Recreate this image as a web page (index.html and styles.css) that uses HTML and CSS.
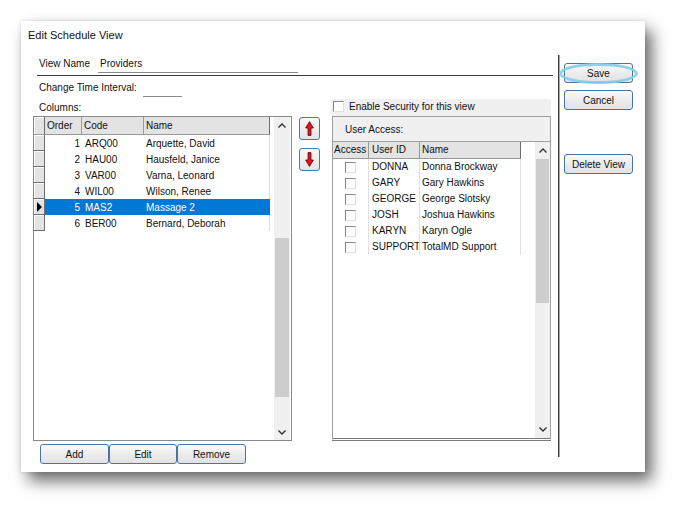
FILE: index.html
```html
<!DOCTYPE html>
<html>
<head>
<meta charset="utf-8">
<title>Edit Schedule View</title>
<link rel="stylesheet" href="styles.css">
</head>
<body>
<div class="dialog">
  <div class="title">Edit Schedule View</div>
  <div class="content">
    <div class="main">
      <div class="name-row">
        <span class="name-lbl">View Name</span>
        <span class="name-input">Providers</span>
      </div>
      <div class="cols">
        <div class="left">
          <div class="interval-row"><span>Change Time Interval:</span><span class="interval-input"></span></div>
          <div class="columns-lbl">Columns:</div>
          <div class="lgrid">
            <div class="ltable">
              <div class="lrow lhead">
                <div class="rh"></div><div class="c order">Order</div><div class="c code">Code</div><div class="c name">Name</div>
              </div>
              <div class="lrow"><div class="rh"></div><div class="c order">1</div><div class="c code">ARQ00</div><div class="c name">Arquette, David</div></div>
              <div class="lrow"><div class="rh"></div><div class="c order">2</div><div class="c code">HAU00</div><div class="c name">Hausfeld, Janice</div></div>
              <div class="lrow"><div class="rh"></div><div class="c order">3</div><div class="c code">VAR00</div><div class="c name">Varna, Leonard</div></div>
              <div class="lrow"><div class="rh"></div><div class="c order">4</div><div class="c code">WIL00</div><div class="c name">Wilson, Renee</div></div>
              <div class="lrow sel"><div class="rh"><span class="tri"></span></div><div class="c order">5</div><div class="c code">MAS2</div><div class="c name">Massage 2</div></div>
              <div class="lrow"><div class="rh"></div><div class="c order">6</div><div class="c code">BER00</div><div class="c name">Bernard, Deborah</div></div>
            </div>
            <div class="vscroll lscroll">
              <div class="sbtn"><svg width="8" height="5" viewBox="0 0 8 5"><path d="M0.5 4.5 L4 1 L7.5 4.5" fill="none" stroke="#333" stroke-width="1.4"/></svg></div>
              <div class="strack l-up"></div>
              <div class="sthumb l-thumb"></div>
              <div class="strack l-down"></div>
              <div class="sbtn"><svg width="8" height="5" viewBox="0 0 8 5"><path d="M0.5 0.5 L4 4 L7.5 0.5" fill="none" stroke="#333" stroke-width="1.4"/></svg></div>
            </div>
          </div>
          <div class="btn-row">
            <button class="btn b-add">Add</button><button class="btn b-edit">Edit</button><button class="btn b-rem">Remove</button>
          </div>
        </div>
        <div class="arrows">
          <button class="abtn"><svg width="9" height="15" viewBox="0 0 9 15"><path d="M4.5 0.6 L8.4 7 L6 7 L6 14.4 L3 14.4 L3 7 L0.6 7 Z" fill="#e8101a" stroke="#5a0a0a" stroke-width="0.8"/></svg></button>
          <button class="abtn"><svg width="9" height="15" viewBox="0 0 9 15"><path d="M4.5 14.4 L8.4 8 L6 8 L6 0.6 L3 0.6 L3 8 L0.6 8 Z" fill="#e8101a" stroke="#5a0a0a" stroke-width="0.8"/></svg></button>
        </div>
        <div class="right">
          <div class="sec-band"><span class="chk"></span><span>Enable Security for this view</span></div>
          <div class="ua-box">User Access:</div>
          <div class="rgrid">
            <div class="rtable">
              <div class="rrow rhead"><div class="c acc">Access</div><div class="c uid">User ID</div><div class="c uname">Name</div></div>
              <div class="rrow"><div class="c acc"><span class="chk"></span></div><div class="c uid">DONNA</div><div class="c uname">Donna Brockway</div></div>
              <div class="rrow"><div class="c acc"><span class="chk"></span></div><div class="c uid">GARY</div><div class="c uname">Gary Hawkins</div></div>
              <div class="rrow"><div class="c acc"><span class="chk"></span></div><div class="c uid">GEORGE</div><div class="c uname">George Slotsky</div></div>
              <div class="rrow"><div class="c acc"><span class="chk"></span></div><div class="c uid">JOSH</div><div class="c uname">Joshua Hawkins</div></div>
              <div class="rrow"><div class="c acc"><span class="chk"></span></div><div class="c uid">KARYN</div><div class="c uname">Karyn Ogle</div></div>
              <div class="rrow"><div class="c acc"><span class="chk"></span></div><div class="c uid">SUPPORT</div><div class="c uname">TotalMD Support</div></div>
            </div>
            <div class="vscroll rscroll">
              <div class="sbtn"><svg width="8" height="5" viewBox="0 0 8 5"><path d="M0.5 4.5 L4 1 L7.5 4.5" fill="none" stroke="#333" stroke-width="1.4"/></svg></div>
              <div class="sthumb r-thumb"></div>
              <div class="strack r-down"></div>
              <div class="sbtn"><svg width="8" height="5" viewBox="0 0 8 5"><path d="M0.5 0.5 L4 4 L7.5 0.5" fill="none" stroke="#333" stroke-width="1.4"/></svg></div>
            </div>
          </div>
        </div>
      </div>
    </div>
    <div class="vline"></div>
    <div class="side">
      <div class="save-wrap"><button class="btn sbtn-side">Save</button><span class="ring"></span></div>
      <button class="btn sbtn-side b-cancel">Cancel</button>
      <button class="btn sbtn-side b-del">Delete View</button>
    </div>
  </div>
</div>
</body>
</html>
```

FILE: styles.css
```css
* { box-sizing: border-box; }
html, body { margin: 0; padding: 0; background: #fff; }
body {
  width: 687px; height: 514px; overflow: hidden;
  font-family: "Liberation Sans", Arial, sans-serif;
  font-size: 10px; color: #111;
}
.dialog {
  margin: 21px 0 0 21px;
  width: 624px; height: 451px;
  background: #fff;
  box-shadow: 7px 9px 15px rgba(0,0,0,0.58), 0 0 4px rgba(0,0,0,0.12);
}
.title {
  height: 34px; padding: 7px 0 0 7px;
  font-size: 11px; line-height: 14px; color: #111;
}
.content { display: flex; align-items: flex-start; }
.main { width: 520px; margin-left: 12px; }
.name-row {
  display: flex; height: 21px; margin-left: 4px; width: 516px;
  padding-top: 2px; border-bottom: 1px solid #3a3a3a;
}
.name-lbl { width: 61px; padding-left: 2px; line-height: 14px; }
.name-input {
  width: 200px; height: 16px; padding-left: 2px; line-height: 14px;
  border-bottom: 1px solid #8a8a8a;
}
.cols { display: flex; }
.left { width: 259px; }
.interval-row { display: flex; height: 21px; padding: 5px 0 0 6px; line-height: 14px; }
.interval-input { width: 39px; height: 16px; margin-left: 6px; border-bottom: 1px solid #8a8a8a; }
.columns-lbl { height: 19px; padding: 4px 0 0 6px; line-height: 14px; }

.lgrid { display: flex; height: 325px; border: 1px solid #8a8a8a; }
.ltable { width: 236px; margin-right: 4px; }
.lrow { display: flex; height: 16px; line-height: 15px; }
.lrow .c { white-space: nowrap; overflow: hidden; padding-top: 1px; }
.lrow .rh {
  width: 11px; background: #e3e3e3;
  border-right: 1px solid #6e6e6e; border-bottom: 1px solid #6e6e6e;
  box-shadow: inset 1px 1px 0 #fff;
  display: flex; align-items: center; justify-content: center;
}
.lrow .order { width: 37px; text-align: right; padding-right: 2px; }
.lrow .code { width: 62px; padding-left: 3px; }
.lrow .name { width: 126px; padding-left: 2px; border-right: 1px solid #dcdcdc; }
.lhead { height: 18px; line-height: 16px; }
.lhead .c { background: #e3e3e3; border-right: 1px solid #9a9a9a; border-bottom: 1px solid #9a9a9a; text-align: left; padding-left: 2px; padding-top: 1px; }
.lhead .order { padding-left: 2px; padding-right: 0; }
.lhead .name { border-right: 1px solid #6e6e6e; }
.lhead .rh { border-bottom: 1px solid #9a9a9a; }
.lrow.sel .c { background: #0078d7; color: #fff; border-right-color: #0078d7; }
.tri { width: 0; height: 0; border-left: 5px solid #000; border-top: 5px solid transparent; border-bottom: 5px solid transparent; }

.vscroll { display: flex; flex-direction: column; background: #f0f0f0; }
.lscroll { width: 16px; }
.sbtn { height: 17px; display: flex; align-items: center; justify-content: center; flex: none; }
.strack { flex: none; }
.sthumb { flex: none; background: #cdcdcd; margin: 0 1px; }
.l-up { height: 104px; }
.l-thumb { height: 159px; }
.l-down { height: 27px; }

.btn-row { display: flex; padding: 3px 0 0 7px; }
.btn {
  font-family: "Liberation Sans", Arial, sans-serif; font-size: 10px; color: #111;
  height: 20px; padding: 0; margin: 0;
  background: linear-gradient(#fbfbfb, #ececec 50%, #e2e2e2);
  border: 1px solid #4a74a6; border-radius: 3px;
}
.b-add { width: 69px; }
.b-edit { width: 68px; }
.b-rem { width: 69px; }

.arrows { display: flex; flex-direction: column; gap: 8px; width: 21px; margin-left: 7px; padding-top: 41px; }
.abtn {
  width: 21px; height: 23px; padding: 0; margin: 0;
  display: flex; align-items: center; justify-content: center;
  background: linear-gradient(#f8f8f8, #e4e4e4);
  border: 1px solid #3f7bb8; border-radius: 3px;
}

.right { width: 220px; margin-left: 11px; }
.sec-band {
  display: flex; align-items: center; gap: 5px;
  margin-top: 23px; height: 17px; background: #f0f0f0; padding: 0 0 2px 2px;
}
.chk {
  display: inline-block; width: 11px; height: 11px; background: #fff;
  border: 1px solid; border-color: #858585 #e0e0e0 #e0e0e0 #858585;
}
.ua-box {
  margin-left: 1px; width: 219px; height: 25px; background: #f0f0f0;
  border: 1px solid #a0a0a0; border-bottom: none;
  padding: 6px 0 0 12px; line-height: 14px;
}
.rgrid {
  display: flex; margin-left: 1px; width: 219px; height: 300px;
  border: 1px solid #a0a0a0; border-top: 1px solid #a0a0a0; border-bottom: 3px double #7a7a7a;
}
.rtable { width: 202px; }
.rrow { display: flex; height: 16px; line-height: 15px; }
.rrow .c { white-space: nowrap; overflow: hidden; border-right: 1px solid #e0e0e0; }
.rrow .acc { width: 36px; display: flex; align-items: center; justify-content: center; padding-right: 1px; }
.rrow .uid { width: 51px; padding-left: 3px; }
.rrow .uname { width: 101px; padding-left: 2px; }
.rhead { height: 17px; }
.rhead .c { background: #e3e3e3; border-right: 1px solid #9a9a9a; border-bottom: 1px solid #9a9a9a; line-height: 16px; }
.rhead .acc { display: block; padding: 0 0 0 1px; }
.rhead .uname { border-right: 1px solid #6e6e6e; }
.rscroll { width: 15px; }
.r-thumb { height: 144px; }
.r-down { flex: 1; }

.vline { width: 2px; height: 402px; margin-left: 5px; border-left: 1px solid #3a3a3a; border-right: 1px solid #a8a8a8; }
.side { display: flex; flex-direction: column; padding-left: 4px; }
.save-wrap { position: relative; margin-top: 8px; }
.sbtn-side { width: 69px; }
.ring {
  position: absolute; left: -5px; top: 0px; width: 79px; height: 21px;
  border: 3px solid rgba(130, 205, 232, 0.9); border-radius: 50%;
}
.b-cancel { margin-top: 7px; }
.b-del { margin-top: 44px; }
```
